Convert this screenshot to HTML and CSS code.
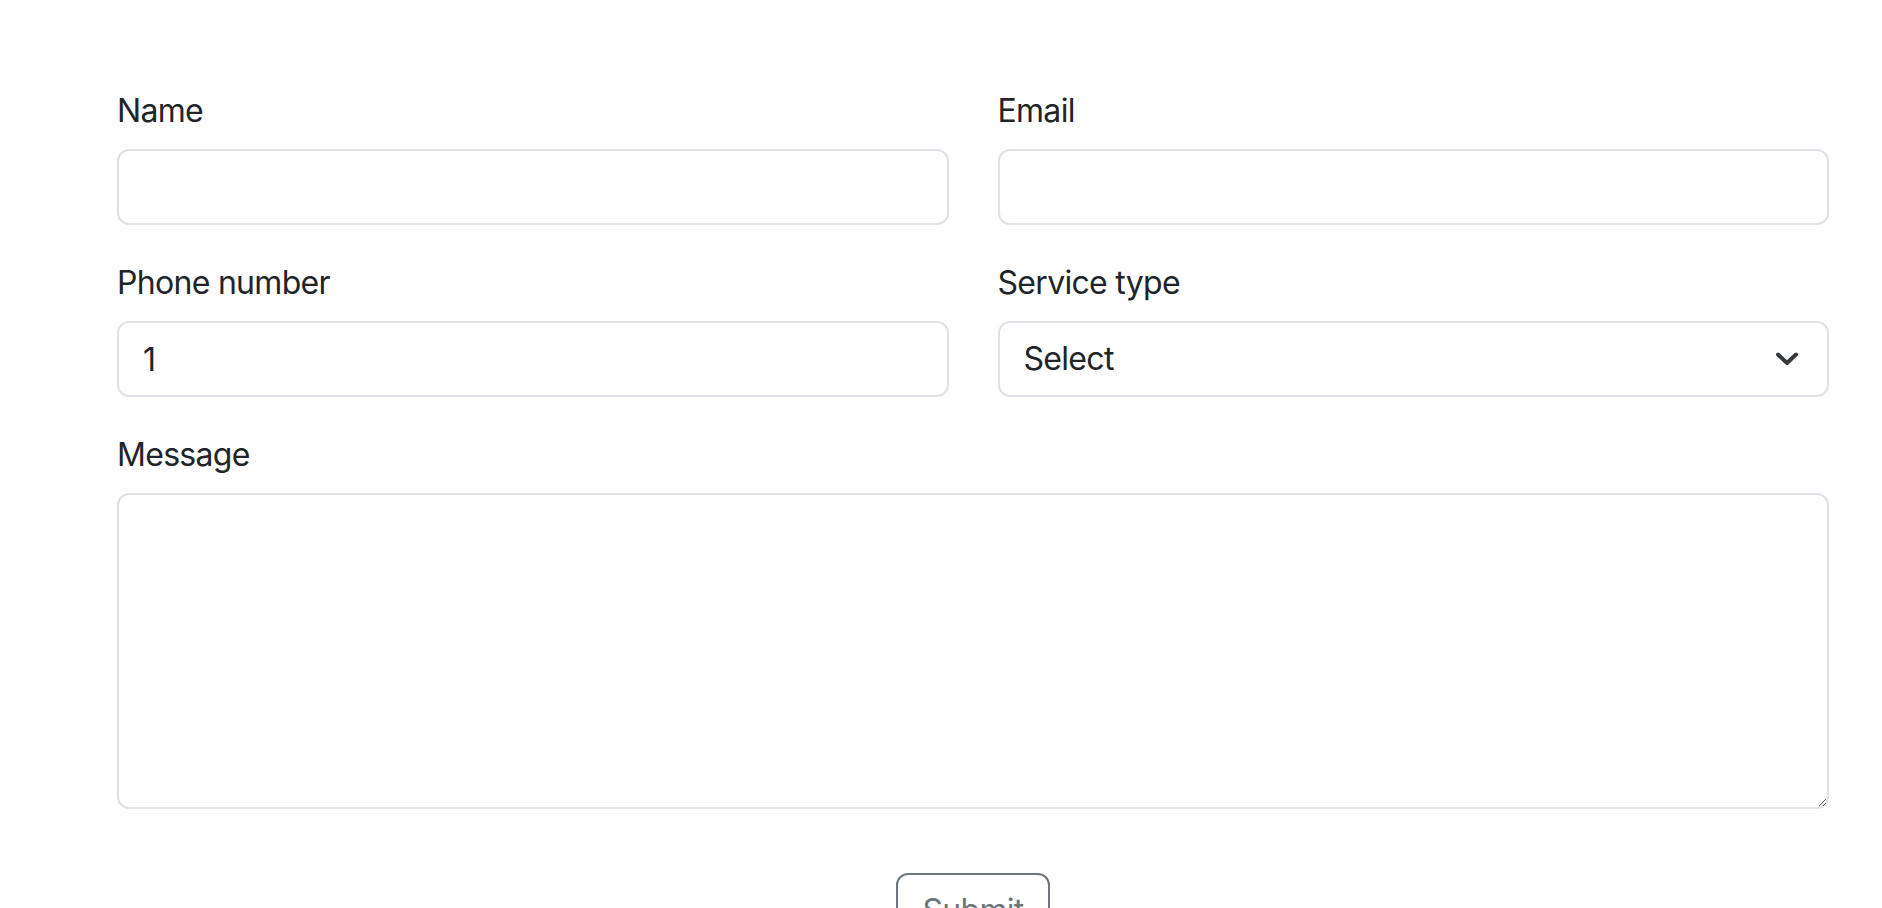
FILE: index.html
```html
<!DOCTYPE html>
<html lang="en">
<head>
<meta charset="utf-8">
<title>Contact form</title>
<link rel="stylesheet" href="styles.css">
</head>
<body>
<form class="contact-form">
  <div class="row">
    <div class="field">
      <label class="field-label" for="name">Name</label>
      <input class="control" id="name" type="text">
    </div>
    <div class="field">
      <label class="field-label" for="email">Email</label>
      <input class="control" id="email" type="email">
    </div>
  </div>
  <div class="row">
    <div class="field">
      <label class="field-label" for="phone">Phone number</label>
      <input class="control" id="phone" type="tel" value="1">
    </div>
    <div class="field">
      <label class="field-label" for="service">Service type</label>
      <div class="select-wrap">
        <select class="control select" id="service">
          <option>Select</option>
        </select>
        <svg class="chevron" width="24" height="16" viewBox="0 0 24 16" aria-hidden="true">
          <path d="M3 3.5 L12 12 L21 3.5" fill="none" stroke="#343a40" stroke-width="4" stroke-linecap="round" stroke-linejoin="round"/>
        </svg>
      </div>
    </div>
  </div>
  <div class="row single">
    <div class="field">
      <label class="field-label" for="message">Message</label>
      <textarea class="control textarea" id="message" rows="6"></textarea>
    </div>
  </div>
  <div class="actions">
    <button class="btn-outline" type="submit">Submit</button>
  </div>
</form>
</body>
</html>
```

FILE: styles.css
```css
* { box-sizing: border-box; }

html, body {
  margin: 0;
  padding: 0;
  background: #ffffff;
}

body {
  font-family: Inter, "Liberation Sans", Arial, sans-serif;
  font-size: 32px;
  line-height: 1.5;
  color: #212529;
}

.contact-form {
  padding: 85px 53px 0 117px;
  display: flex;
  flex-direction: column;
}

.row {
  display: grid;
  grid-template-columns: 1fr 1fr;
  column-gap: 49px;
  margin-bottom: 32px;
}

.row.single {
  grid-template-columns: 1fr;
  margin-bottom: 64px;
}

.field {
  display: flex;
  flex-direction: column;
  min-width: 0;
}

.field-label {
  display: block;
  padding-top: 2px;
  margin-bottom: 14px;
  line-height: 48px;
  letter-spacing: -0.7px;
}

.control {
  display: block;
  width: 100%;
  height: 76px;
  padding: 12px 24px;
  font-family: inherit;
  font-size: 32px;
  line-height: 48px;
  color: #212529;
  background: #ffffff;
  border: 2px solid #dee2e6;
  border-radius: 12px;
  outline: none;
  margin: 0;
  letter-spacing: -0.7px;
}

.select-wrap {
  position: relative;
}

.select {
  appearance: none;
  -webkit-appearance: none;
  padding-right: 96px;
}

.chevron {
  position: absolute;
  right: 30px;
  top: 50%;
  margin-top: -8px;
  pointer-events: none;
}

.textarea {
  height: 316px;
  resize: vertical;
}

.actions {
  display: flex;
  justify-content: center;
}

.btn-outline {
  font-family: inherit;
  font-size: 32px;
  line-height: 48px;
  padding: 12px 24px;
  color: #6c757d;
  background: transparent;
  border: 2px solid #6c757d;
  border-radius: 12px;
  letter-spacing: -0.7px;
}
```
